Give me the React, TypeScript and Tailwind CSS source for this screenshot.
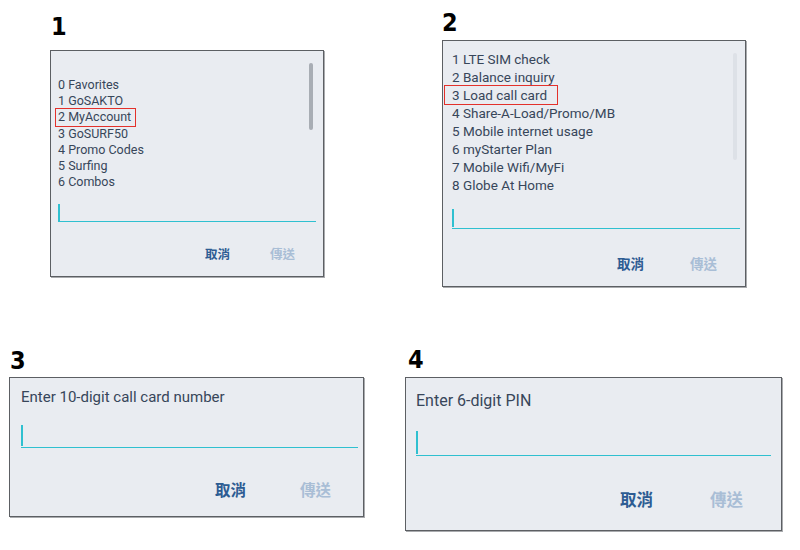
import type { ReactNode } from "react"

const labelFont = { fontFamily: '"Liberation Sans Narrow", "DejaVu Sans Condensed", "Liberation Sans", sans-serif' }
const bodyFont = { fontFamily: 'Roboto, "Noto Sans", sans-serif' }
const cjkFont = { fontFamily: '"Noto Sans CJK TC", "Noto Sans CJK SC", sans-serif' }

interface DialogProps {
    box: string
    body: string
    input: string
    cursor: string
    actions: string
    children: ReactNode
    scrollbar?: string
}

function Dialog({ box, body, input, cursor, actions, children, scrollbar }: DialogProps) {
    return (
        <div className={`relative flex flex-col border border-[#5c5f63] bg-[#e9ecf1] shadow-[1px_1px_0_#a9abae] ${box}`}>
            {scrollbar && <div className={`absolute w-[4px] rounded-full ${scrollbar}`} />}
            <div className={`text-[#37465a] ${body}`} style={bodyFont}>
                {children}
            </div>
            <div className={`border-b border-[#2fc0d0] ${input}`}>
                <div className={`w-[2px] bg-[#2fc0d0] ${cursor}`} />
            </div>
            <div className={`flex justify-end font-bold ${actions}`} style={cjkFont}>
                <span className="text-[#2d5c93]">取消</span>
                <span className="text-[#a9bed6]">傳送</span>
            </div>
        </div>
    )
}

export default function App() {
    return (
        <div className="h-[550px] w-[800px] overflow-hidden bg-white">
            <div className="flex items-start">
                <div className="ml-[50px] flex flex-col">
                    <div className="mt-[14px] mb-[11px] h-[25px] pl-[1px] text-[25px] leading-[25px] font-bold text-black" style={labelFont}>
                        1
                    </div>
                    <Dialog
                        box="h-[227px] w-[274px] px-[7px] pt-[26px]"
                        body="text-[12.5px] leading-[16px]"
                        input="mt-[14px] h-[18px]"
                        cursor="h-[17px]"
                        actions="mt-[22px] mr-[21px] gap-[40px] text-[12.5px] leading-[20px]"
                        scrollbar="top-[12px] right-[10px] h-[67px] bg-[#a8adb4]"
                    >
                        <div>0 Favorites</div>
                        <div>1 GoSAKTO</div>
                        <div>
                            <span className="-ml-[2px] inline-block h-[17px] pr-[4px] pl-[2px] outline-1 outline-[#e3312b]">2 MyAccount</span>
                        </div>
                        <div>3 GoSURF50</div>
                        <div>4 Promo Codes</div>
                        <div>5 Surfing</div>
                        <div>6 Combos</div>
                    </Dialog>
                </div>
                <div className="ml-[118px] flex flex-col">
                    <div className="mt-[10px] mb-[5px] h-[25px] text-[25px] leading-[25px] font-bold text-black" style={labelFont}>
                        2
                    </div>
                    <Dialog
                        box="h-[247px] w-[304px] pr-[5px] pl-[9px] pt-[9px]"
                        body="text-[13.5px] leading-[18px]"
                        input="mt-[15px] h-[20px]"
                        cursor="h-[18px]"
                        actions="mt-[24px] mr-[23px] gap-[46px] text-[13.5px] leading-[20px]"
                        scrollbar="top-[12px] right-[8px] h-[107px] bg-[#dde1e7]"
                    >
                        <div>1 LTE SIM check</div>
                        <div>2 Balance inquiry</div>
                        <div>
                            <span className="-ml-[7px] inline-block h-[18px] pr-[10px] pl-[7px] outline-1 outline-[#e3312b]">3 Load call card</span>
                        </div>
                        <div>4 Share-A-Load/Promo/MB</div>
                        <div>5 Mobile internet usage</div>
                        <div>6 myStarter Plan</div>
                        <div>7 Mobile Wifi/MyFi</div>
                        <div>8 Globe At Home</div>
                    </Dialog>
                </div>
            </div>
            <div className="mt-[60px] flex items-start">
                <div className="ml-[9px] flex flex-col">
                    <div className="mt-[1px] mb-[4px] h-[25px] pl-[1px] text-[25px] leading-[25px] font-bold text-black" style={labelFont}>
                        3
                    </div>
                    <Dialog
                        box="h-[140px] w-[355px] pr-[5px] pl-[11px] pt-[9px]"
                        body="text-[15px] leading-[20px]"
                        input="mt-[18px] h-[23px]"
                        cursor="h-[21px]"
                        actions="mt-[30px] mr-[27px] gap-[54px] text-[15.5px] leading-[22px]"
                    >
                        Enter 10-digit call card number
                    </Dialog>
                </div>
                <div className="ml-[41px] flex flex-col">
                    <div className="mb-[5px] h-[25px] pl-[3px] text-[25px] leading-[25px] font-bold text-black" style={labelFont}>
                        4
                    </div>
                    <Dialog
                        box="h-[154px] w-[377px] pr-[10px] pl-[10px] pt-[13px]"
                        body="text-[16px] leading-[20px]"
                        input="mt-[20px] h-[25px]"
                        cursor="h-[23px]"
                        actions="mt-[32px] mr-[28px] gap-[57px] text-[16.5px] leading-[22px]"
                    >
                        Enter 6-digit PIN
                    </Dialog>
                </div>
            </div>
        </div>
    )
}
